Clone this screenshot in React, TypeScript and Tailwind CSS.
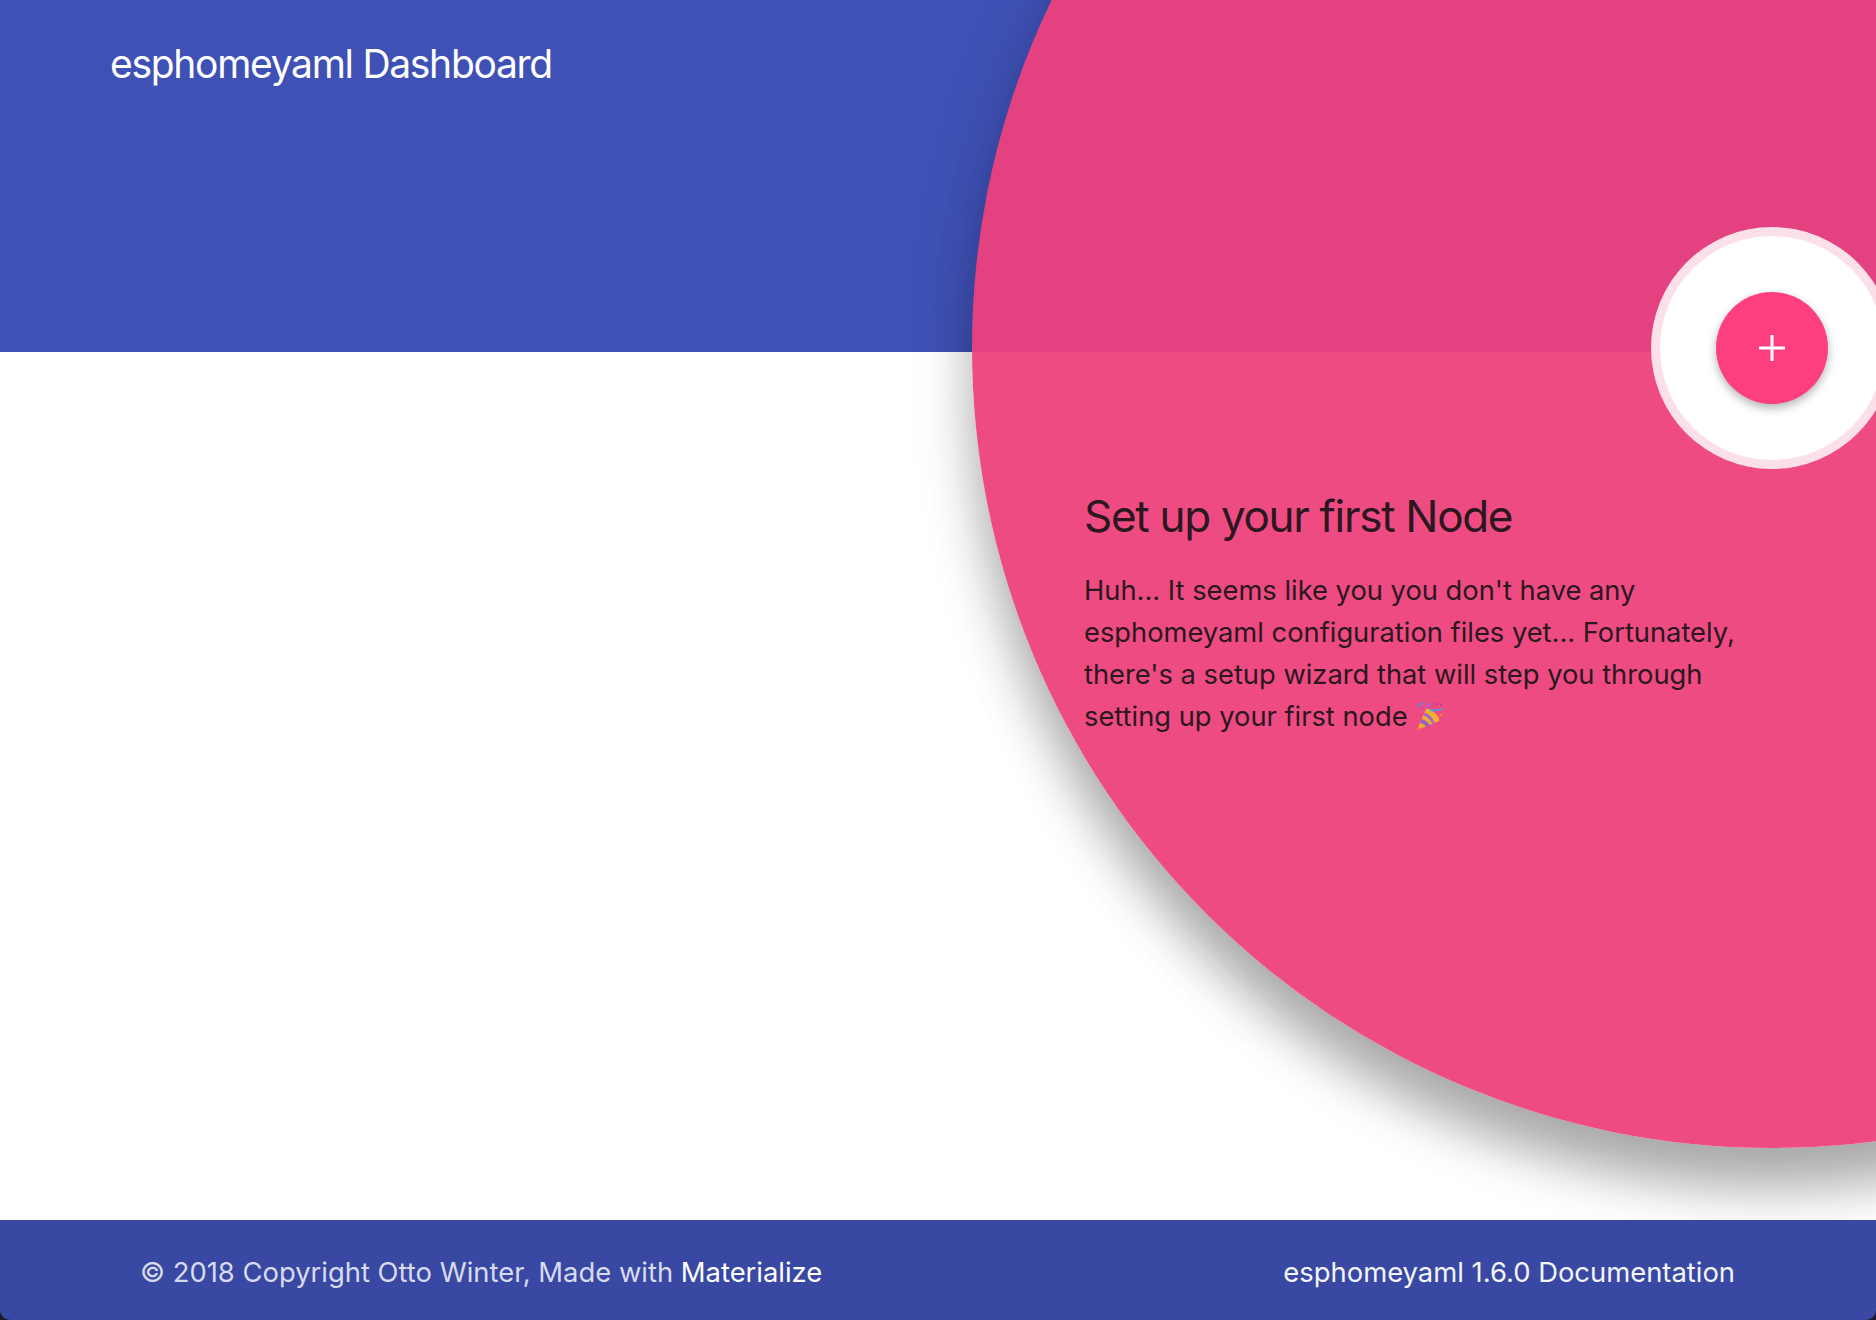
const font = "font-['Inter','Liberation_Sans',sans-serif]";

function PartyPopper() {
  return (
    <svg viewBox="0 0 28 28" className="inline-block w-[28px] h-[28px] ml-[1px] align-[-4px]">
      <path d="M1 28 L10 7 Q14 6 20 12 Q24 16 23 19 Z" fill="#f2ae2e" />
      <path d="M5.6 17.2 Q10 17 14.4 24 L10.6 25.2 Q8 21.5 4 21 Z" fill="#9c5fc0" />
      <path d="M8.4 10.8 Q14 11 19 21 L16.6 22 Q13 15.5 7.4 13.2 Z" fill="#a868c8" />
      <path d="M2.2 25 L5 26.8 L1 28 Z" fill="#e8772e" />
      <path d="M14 8 Q20 9 27 7" stroke="#3f9fea" strokeWidth="1.8" fill="none" />
      <path d="M11 6 Q14 4 11 0.5" stroke="#8a68e4" strokeWidth="1.8" fill="none" />
      <path d="M16 5 Q19 3 17 0.5" stroke="#c0509c" strokeWidth="1.5" fill="none" />
      <circle cx="3" cy="3" r="1.4" fill="#5088ec" />
      <circle cx="6" cy="6" r="1.1" fill="#8f55d8" />
      <circle cx="7" cy="1.5" r="1.1" fill="#3f9fea" />
      <circle cx="21" cy="2" r="1.3" fill="#c8408c" />
      <circle cx="25" cy="3" r="1.1" fill="#b84088" />
      <circle cx="25" cy="13" r="1.1" fill="#e09a20" />
      <circle cx="24" cy="21" r="1.1" fill="#c8408c" />
      <circle cx="27" cy="18" r="1" fill="#9c5fc0" />
    </svg>
  );
}

function TapTarget() {
  return (
    <div className="absolute left-[972px] top-[-452px] w-[1600px] h-[1600px] rounded-full bg-[#ee407b]/94 shadow-[0_48px_50px_-6px_rgba(0,0,0,0.28),0_10px_70px_0_rgba(0,0,0,0.13)]">
      <div className="absolute left-[112px] top-[942px] w-[660px]">
        <h4 className="text-[44px] leading-[52px] tracking-[-1.3px] text-[#2a1720] font-normal">Set up your first Node</h4>
        <p className="mt-[28px] text-[27.3px] leading-[42px] text-[#2a1720]">
          Huh... It seems like you you don't have any esphomeyaml configuration files yet... Fortunately, there's a setup wizard that will step you through setting up your first node <PartyPopper />
        </p>
      </div>
      <div className="absolute left-[679px] top-[679px] w-[242px] h-[242px] rounded-full bg-[#fbe0ea] flex items-center justify-center">
        <div className="w-[224px] h-[224px] rounded-full bg-white flex items-center justify-center">
          <button className="w-[112px] h-[112px] rounded-full bg-[#fd3f80] shadow-[0_4px_10px_0_rgba(0,0,0,0.3)] flex items-center justify-center">
            <svg viewBox="0 0 26 26" className="w-[26px] h-[26px]">
              <path d="M13 0V26M0 13H26" stroke="#fff" strokeWidth="3" />
            </svg>
          </button>
        </div>
      </div>
    </div>
  );
}

export default function App() {
  return (
    <div className={`relative flex flex-col h-[1320px] w-[1876px] overflow-hidden bg-[#1c1c2a] ${font}`}>
      <header className="h-[352px] bg-[#3f51b5] pl-[110px] pt-[40px]">
        <span className="text-[39px] leading-[48px] tracking-[-1.3px] text-white">esphomeyaml Dashboard</span>
      </header>
      <main className="flex-1 bg-white" />
      <TapTarget />
      <footer className="relative h-[100px] rounded-b-[10px] bg-[#3848a3] flex items-center justify-between pl-[140px] pr-[141px] pt-[5px] text-[27.4px]">
        <span className="text-[#d8dbee]">© 2018 Copyright Otto Winter, Made with <a className="text-white">Materialize</a></span>
        <span className="text-[#f4f5fb]">esphomeyaml 1.6.0 Documentation</span>
      </footer>
    </div>
  );
}
